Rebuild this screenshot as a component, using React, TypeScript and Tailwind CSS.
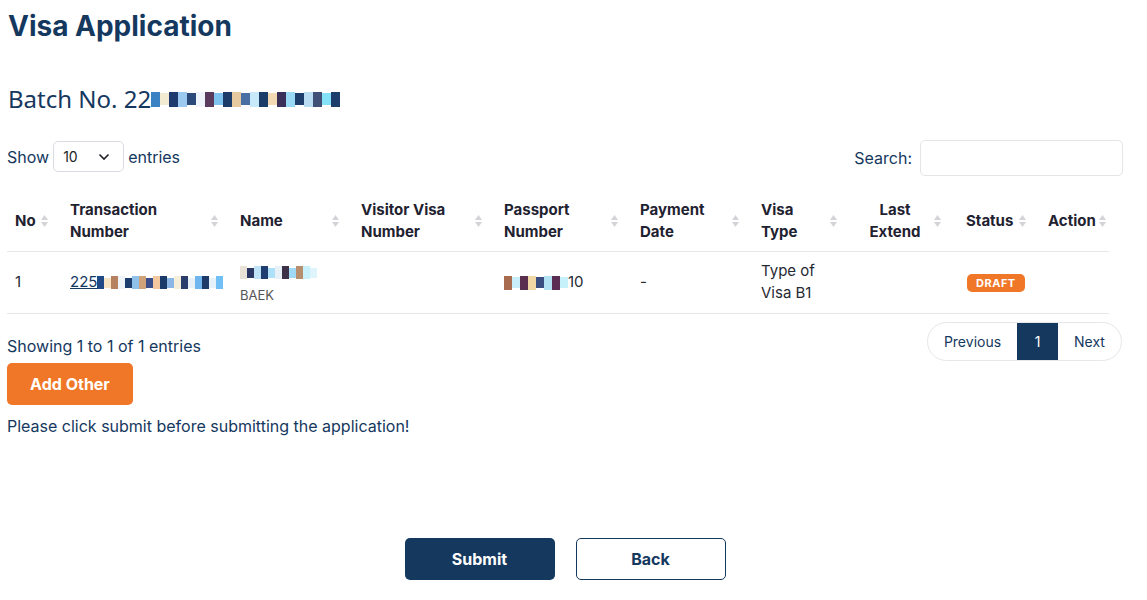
import React from "react";

const navy = "#15385e";

function Mosaic({ colors, size = 6 }: { colors: string[]; size?: number }) {
  return (
    <span className="inline-flex items-center align-middle">
      {colors.map((c, i) => (
        <span
          key={i}
          className="inline-block"
          style={{ width: size, height: i % 3 === 1 ? size + 3 : size + 6, backgroundColor: c }}
        />
      ))}
    </span>
  );
}

function SortIcon() {
  return (
    <span className="flex flex-col items-center gap-[2px] text-[#d4d4d8] shrink-0">
      <svg width="7" height="5" viewBox="0 0 7 5"><path d="M3.5 0L7 5H0z" fill="currentColor" /></svg>
      <svg width="7" height="5" viewBox="0 0 7 5"><path d="M0 0h7L3.5 5z" fill="currentColor" /></svg>
    </span>
  );
}

const cols = [
  { label: ["No"], w: "w-[55px]", pad: "pl-[8px] pr-[14px]" },
  { label: ["Transaction", "Number"], w: "w-[170px]", pad: "pl-[8px] pr-[14px]" },
  { label: ["Name"], w: "w-[121px]", pad: "pl-[8px] pr-[14px]" },
  { label: ["Visitor Visa", "Number"], w: "w-[143px]", pad: "pl-[8px] pr-[14px]" },
  { label: ["Passport", "Number"], w: "w-[136px]", pad: "pl-[8px] pr-[14px]" },
  { label: ["Payment", "Date"], w: "w-[121px]", pad: "pl-[8px] pr-[14px]" },
  { label: ["Visa", "Type"], w: "w-[98px]", pad: "pl-[8px] pr-[14px]" },
  { label: ["Last", "Extend"], w: "w-[104px]", pad: "pl-[8px] pr-[14px]", center: true },
  { label: ["Status"], w: "w-[81px]", pad: "pl-[11px] pr-[10px]" },
  { label: ["Action"], w: "w-[73px]", pad: "pl-[12px] pr-[4px]" },
];

const batchColors = ["#3b82c4", "#f3ead2", "#1e3a6e", "#9bc9ef", "#2b4a7a", "#eef4fa", "#5a3b5e", "#7fc3f0", "#1b3c68", "#e7c9a0", "#4a6fa3", "#c7e9f9", "#1b3c68", "#f2d9b4", "#3a2f58", "#9ad9f3", "#1d3d6b", "#b9dcf2", "#3f4f75", "#84e1f7", "#1d3d6b"];
const txColors = ["#1f4a86", "#f6e3c4", "#b5815f", "#eef4fa", "#1c3d6e", "#8fc1ea", "#cfa27a", "#3a4f8a", "#f3c89e", "#1a3a6a", "#8ab7e6", "#f5eed8", "#2a3f6c", "#e9f1f8", "#6fb6ee", "#1d3a69", "#e6f2fb", "#71c0f5"];
const nameColors = ["#e9e2d6", "#2a3762", "#bfe3f6", "#1f3d70", "#aee0f7", "#e9f1f8", "#3d3148", "#9fd9f5", "#b78e6e", "#c8f1fb", "#dff4fb"];
const ppColors = ["#a86b4f", "#c9eef9", "#5a2e4f", "#f1d7a4", "#3a4e80", "#b3e2f3", "#5b2d52", "#c6f0fa"];

export default function App() {
  return (
    <div className="w-[1147px] h-[600px] bg-white px-[7px] pt-[8px] text-[#15385e]" style={{ fontFamily: "Inter, 'Noto Sans', sans-serif" }}>
      <h1 className="text-[28px] font-bold leading-[36px] pl-[1px]">Visa Application</h1>
      <div className="mt-[39px] text-[24px] leading-[32px] flex items-center pl-[1px]" style={{ fontFamily: "'Noto Sans', Inter, sans-serif" }}>
        <span>Batch No. 22</span>
        <Mosaic colors={batchColors} size={9} />
      </div>

      <div className="mt-[22px] flex items-center justify-between">
        <div className="flex items-center gap-[4px] text-[16px]">
          <span>Show</span>
          <div className="w-[71px] h-[31px] border border-[#d9dde3] rounded-[5px] flex items-center justify-between px-[9px] text-[14px] text-[#212529]">
            <span>10</span>
            <svg width="12" height="8" viewBox="0 0 12 8" className="mr-[4px]"><path d="M1.5 1.5L6 6l4.5-4.5" stroke="#212529" strokeWidth="1.6" fill="none" /></svg>
          </div>
          <span>entries</span>
        </div>
        <div className="flex items-center gap-[8px] text-[16px] mt-[3px] mr-[17px]">
          <span>Search:</span>
          <div className="w-[203px] h-[36px] border border-[#e3e5e8] rounded-[5px]" />
        </div>
      </div>

      <table className="mt-[16px] w-[1102px] table-fixed border-collapse text-[15px]">
        <thead>
          <tr className="border-b border-[#e5e7eb] h-[59px]">
            {cols.map((c, i) => (
              <th key={i} className={`${c.w} ${c.pad} font-bold text-[#1f2230] leading-[22px] align-middle`}>
                <div className="flex items-center justify-between gap-[3px]">
                  <div className={c.center ? "flex-1 text-center" : "text-left"}>
                    {c.label.map((l) => (
                      <div key={l}>{l}</div>
                    ))}
                  </div>
                  <SortIcon />
                </div>
              </th>
            ))}
          </tr>
        </thead>
        <tbody className="text-[#262a33]">
          <tr className="border-b border-[#e5e7eb] h-[62px]">
            <td className="pl-[8px]">1</td>
            <td className="pl-[8px]">
              <span className="underline" style={{ color: navy }}>225</span>
              <Mosaic colors={txColors} size={7} />
            </td>
            <td className="pl-[8px] leading-[22px]">
              <div><Mosaic colors={nameColors} size={7} /></div>
              <div className="text-[13px] text-[#555] leading-[16px] mt-[4px]">BAEK</div>
            </td>
            <td></td>
            <td className="pl-[8px]">
              <Mosaic colors={ppColors} size={8} />
              <span>10</span>
            </td>
            <td className="pl-[8px]">-</td>
            <td className="pl-[8px] leading-[22px]">
              <div>Type of</div>
              <div>Visa B1</div>
            </td>
            <td></td>
            <td className="pl-[12px]">
              <span className="inline-block bg-[#f07727] text-white text-[11px] font-bold tracking-[0.5px] px-[9px] leading-[18px] rounded-[5px]">DRAFT</span>
            </td>
            <td></td>
          </tr>
        </tbody>
      </table>

      <div className="mt-[8px] flex items-start justify-between">
        <div className="mt-[14px] text-[16px] leading-[20px]">Showing 1 to 1 of 1 entries</div>
        <div className="flex h-[39px] border border-[#e5e7eb] rounded-full overflow-hidden text-[14px] mr-[18px]">
          <span className="w-[89px] flex items-center justify-center">Previous</span>
          <span className="w-[41px] flex items-center justify-center bg-[#15385e] text-white">1</span>
          <span className="w-[63px] flex items-center justify-center">Next</span>
        </div>
      </div>

      <button className="mt-[2px] w-[126px] h-[42px] bg-[#f07727] text-white text-[16px] font-bold rounded-[5px]">Add Other</button>
      <div className="mt-[11px] text-[16px] leading-[20px]">Please click submit before submitting the application!</div>

      <div className="mt-[102px] flex justify-center gap-[21px] pr-[17px]">
        <button className="w-[150px] h-[42px] bg-[#15385e] text-white text-[16px] font-bold rounded-[5px]">Submit</button>
        <button className="w-[150px] h-[42px] border border-[#15385e] text-[#15385e] text-[16px] font-bold rounded-[5px] bg-white">Back</button>
      </div>
    </div>
  );
}
